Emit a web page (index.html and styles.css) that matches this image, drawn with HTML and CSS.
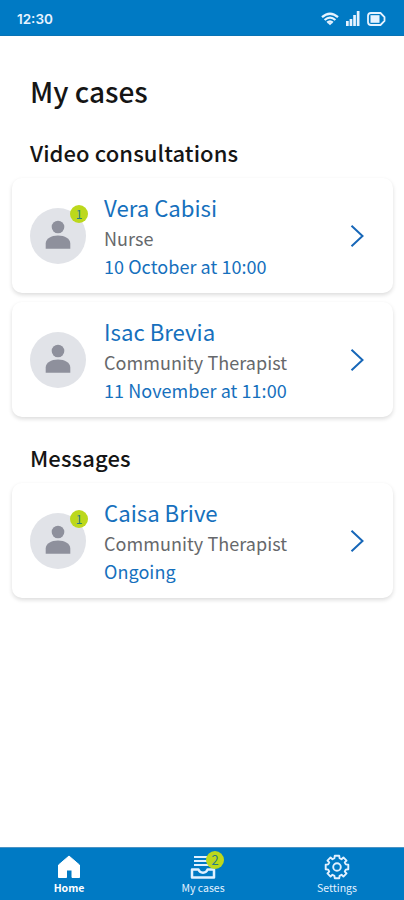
FILE: index.html
```html
<!DOCTYPE html>
<html lang="en">
<head>
<meta charset="utf-8">
<title>My cases</title>
<link rel="stylesheet" href="styles.css">
</head>
<body>
<svg class="defs" width="0" height="0">
  <symbol id="person" viewBox="0 0 26 30"><circle cx="13" cy="7" r="6.300"/><path d="M.7 28.700v-5.200c0-5 5.500-8 12.300-8s12.300 3 12.300 8v5.200z"/></symbol>
  <symbol id="chevron" viewBox="0 0 14 24"><path d="M1.500 1.700 12.500 12 1.500 22.300" fill="none" stroke="currentColor" stroke-width="2"/></symbol>
</svg>
<header class="status">
  <span class="time">12:30</span>
  <div class="indicators">
    <svg width="18" height="14" viewBox="0 0 18 14" fill="none" stroke="currentColor" stroke-width="2.300"><path d="M1 5.200Q9-1.800 17 5.200M3.600 8Q9 3.300 14.400 8M6.200 10.600Q9 8.200 11.800 10.600"/><path d="M9 13.300 6.800 11Q9 9.600 11.200 11z" fill="currentColor" stroke="none"/></svg>
    <svg width="14" height="15" viewBox="0 0 14 15" fill="currentColor"><path d="M0 10h2.700v5H0zM3.600 8h2.700v7H3.600zM7.200 4h2.700v11H7.200zM10.800 0h2.700v15h-2.700z"/></svg>
    <svg width="19" height="14" viewBox="0 0 19 14"><path d="M4 1h9.500l4 4v4l-4 4H4Q1 13 1 10V4Q1 1 4 1z" fill="none" stroke="currentColor" stroke-width="1.800"/><path d="M3.500 3.200h9v7.600h-9z" fill="currentColor"/></svg>
  </div>
</header>
<main>
  <h1>My cases</h1>
  <h2>Video consultations</h2>
  <article class="card">
    <div class="avatar"><svg width="26" height="30"><use href="#person"/></svg><span class="badge">1</span></div>
    <div class="info"><h3>Vera Cabisi</h3><p class="role">Nurse</p><p class="when">10 October at 10:00</p></div>
    <svg class="chevron" width="14" height="24"><use href="#chevron"/></svg>
  </article>
  <article class="card">
    <div class="avatar"><svg width="26" height="30"><use href="#person"/></svg></div>
    <div class="info"><h3>Isac Brevia</h3><p class="role">Community Therapist</p><p class="when">11 November at 11:00</p></div>
    <svg class="chevron" width="14" height="24"><use href="#chevron"/></svg>
  </article>
  <h2 class="messages">Messages</h2>
  <article class="card">
    <div class="avatar"><svg width="26" height="30"><use href="#person"/></svg><span class="badge">1</span></div>
    <div class="info"><h3>Caisa Brive</h3><p class="role">Community Therapist</p><p class="when">Ongoing</p></div>
    <svg class="chevron" width="14" height="24"><use href="#chevron"/></svg>
  </article>
</main>
<nav>
  <a class="tab active"><svg width="24" height="26" viewBox="0 0 24 26"><path d="M12 2 22.500 11v12.500H15V16H9.500v7.500H1.500V11z" fill="currentColor" stroke="currentColor" stroke-linejoin="round"/></svg><span>Home</span></a>
  <a class="tab"><div class="tray"><svg width="26" height="26" viewBox="0 0 26 26" fill="none" stroke="currentColor" stroke-width="2"><path d="M4 3h18M4 7h18M4 11h18"/><path d="M2 15.500h6.500q1 3.200 4.500 3.200t4.500-3.200H24V23.500H2z" stroke-width="2.500" stroke-linejoin="round"/></svg><span class="badge count">2</span></div><span>My cases</span></a>
  <a class="tab"><svg width="26" height="26" viewBox="-13 -13 26 26" fill="none" stroke="currentColor" stroke-width="1.900" stroke-linejoin="round"><path d="M-2.200-11.300 2.200-11.300 2.600-8.800 4.530-7.780 6.430-9.550 9.550-6.430 7.780-4.530 8.800-2.600 11.300-2.200 11.300 2.200 8.800 2.600 7.780 4.530 9.550 6.430 6.430 9.550 4.530 7.780 2.600 8.800 2.200 11.300-2.200 11.300-2.600 8.800-4.530 7.780-6.430 9.550-9.550 6.430-7.780 4.530-8.800 2.600-11.300 2.200-11.300-2.200-8.800-2.600-7.780-4.530-9.550-6.430-6.430-9.550-4.530-7.780-2.600-8.800z"/><circle r="3.800"/></svg><span>Settings</span></a>
</nav>
</body>
</html>
```
FILE: styles.css
```css
* { box-sizing: border-box; margin: 0; padding: 0; }
body {
  display: flex;
  flex-direction: column;
  height: 900px;
  background: #fff;
  color: #151515;
  font-family: "Noto Sans CJK SC", "Noto Sans", sans-serif;
}
.defs { position: absolute; }
.status {
  display: flex;
  justify-content: space-between;
  align-items: center;
  height: 36px;
  padding: 2px 18px 0 17px;
  background: #007ac4;
  border-bottom: 1px solid #0873b5;
  color: #e6f3ff;
}
.time { font: 600 13.5px/18px Inter, sans-serif; }
.indicators { display: flex; align-items: center; gap: 7px; }
main { flex: 1; padding: 35px 11px 0 12px; }
h1 { padding-left: 18px; font-size: 28px; line-height: 40px; font-weight: 500; }
h2 { padding-left: 18px; margin-top: 25px; font-size: 22px; line-height: 32px; font-weight: 500; letter-spacing: .1px; }
h2.messages { margin-top: 24px; }
.card {
  display: flex;
  align-items: center;
  height: 115px;
  margin-top: 9px;
  padding: 0 29px 0 18px;
  border-radius: 10px;
  background: #fff;
  box-shadow: 0 2px 4px rgba(0, 0, 0, .14);
}
h2 + .card { margin-top: 10px; }
.avatar {
  position: relative;
  display: flex;
  justify-content: center;
  align-items: center;
  width: 56px;
  height: 56px;
  padding-bottom: 1px;
  border-radius: 50%;
  background: #e1e3e8;
  fill: #8e909c;
}
.badge {
  position: absolute;
  top: -3px;
  right: -2px;
  width: 18px;
  height: 18px;
  border-radius: 50%;
  background: #bcd81c;
  color: #287b86;
  font-size: 12px;
  line-height: 17px;
  text-align: center;
}
.info { flex: 1; padding-left: 18px; white-space: nowrap; }
h3 { padding-bottom: 1px; font-size: 22.2px; line-height: 31px; font-weight: 400; color: #1670bd; }
.role, .when { font-size: 18px; line-height: 28px; letter-spacing: .06px; color: #66686b; }
.info .when { color: #1670bd; }
.chevron { color: #1767b8; }
nav {
  display: flex;
  height: 53px;
  padding-left: 2px;
  background: #007ac4;
  border-top: 1px solid #4b93c4;
  color: #e2f1ff;
}
.tab { flex: 1; display: flex; flex-direction: column; align-items: center; padding-top: 6px; font-size: 10.500px; line-height: 16px; }
.tab > svg, .tray { display: block; height: 26px; }
.tab.active { color: #fff; font-weight: 700; }
.tray { position: relative; }
.count { top: -3px; right: -8px; line-height: 18px; font-size: 13px; }
```
